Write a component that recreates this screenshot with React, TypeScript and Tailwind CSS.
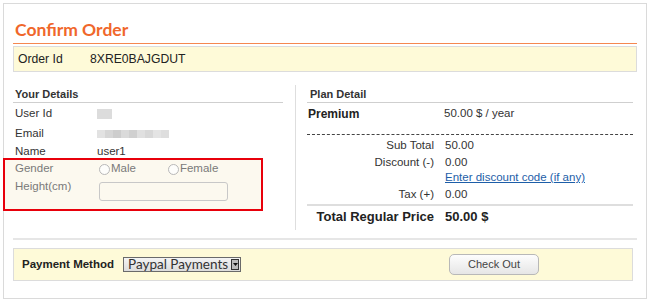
import React from 'react';

const sans = "font-['Liberation_Sans',Arial,sans-serif]";

const DetailRow: React.FC<{ label: string; h: string; children?: React.ReactNode }> = ({ label, h, children }) => (
  <div className={`flex items-center ${h} pl-[2px] text-[11.5px] text-[#333]`}>
    <div className="w-[82px]">{label}</div>
    <div>{children}</div>
  </div>
);

const PriceRow: React.FC<{ label: string; h: string; value: React.ReactNode; bold?: boolean }> = ({ label, h, value, bold }) => (
  <div className={`flex items-center ${h} ${bold ? 'font-bold text-[13px] text-[#222]' : 'text-[11.5px] text-[#333]'}`}>
    <div className="w-[127px] text-right">{label}</div>
    <div className="pl-[11px]">{value}</div>
  </div>
);

const Blur: React.FC<{ shades: string[] }> = ({ shades }) => (
  <div className="flex h-[8px] blur-[0.6px]">
    {shades.map((c, i) => (
      <div key={i} className="w-[8px] h-full" style={{ background: c }} />
    ))}
  </div>
);

const Radio: React.FC<{ label: string }> = ({ label }) => (
  <span className="flex items-center">
    <span className="w-[11px] h-[11px] rounded-full border border-[#b8b8b8] bg-[#fdfdfb]" />
    <span className="ml-[1px]">{label}</span>
  </span>
);

export default function App() {
  return (
    <div className={`w-[650px] h-[302px] bg-white pt-[3px] pl-[3px] ${sans}`}>
      <div className="w-[644px] h-[296px] border border-[#dadada] px-[9px]">
        {/* title */}
        <div className="pt-[14px] pb-[1px] border-b border-[#f5874f]">
          <div className="pl-[2px] leading-[24px] text-[17.5px] font-bold text-[#f0672b] font-['Lato',sans-serif]">Confirm Order</div>
        </div>

        {/* order id */}
        <div className="mt-[2px] h-[26px] flex items-center border border-[#dcdcdc] bg-[#fefad8] pl-[4px] text-[12.2px] text-[#222]">
          <div className="w-[72px]">Order Id</div>
          <div>8XRE0BAJGDUT</div>
        </div>

        {/* details + plan */}
        <div className="mt-[13px] h-[145px] flex">
          <div className="w-[270px]">
            <div className="mt-[2px] pb-[1px] border-b border-[#cfcfcf] pl-[2px] leading-[14px] text-[11px] font-bold text-[#333]">Your Details</div>
            <DetailRow label="User Id" h="h-[22px]">
              <div className="w-[15px] h-[10px] bg-[#dcdcdc] blur-[0.5px]" />
            </DetailRow>
            <DetailRow label="Email" h="h-[18px]">
              <Blur shades={['#e2e2e2', '#d6d6d6', '#cdcdcd', '#dadada', '#d0d0d0', '#e0e0e0', '#d8d8d8', '#e4e4e4', '#dedede']} />
            </DetailRow>
            <DetailRow label="Name" h="h-[18px]">user1</DetailRow>

            <div className="-mt-[3px] -ml-[10px] w-[260px] h-[53px] border-2 border-[#e8000b] bg-[#fcf9ef] pl-[10px] text-[11.5px] text-[#7a7a7a]">
              <div className="h-[18px] flex items-center">
                <div className="w-[84px]">Gender</div>
                <Radio label="Male" />
                <span className="ml-[32px]"><Radio label="Female" /></span>
              </div>
              <div className="flex">
                <div className="w-[84px] h-[16px] leading-[16px]">Height(cm)</div>
                <div className="mt-[4px] w-[129px] h-[19px] rounded-[3px] border border-[#c8c8c8] bg-[#fcf9ef]" />
              </div>
            </div>
          </div>

          <div className="ml-[12px] w-px h-full bg-[#dedede]" />

          <div className="ml-[11px] w-[326px]">
            <div className="mt-[2px] pb-[1px] border-b border-[#cfcfcf] pl-[3px] leading-[14px] text-[11px] font-bold text-[#333]">Plan Detail</div>
            <div className="flex items-center h-[22px] text-[11.5px] text-[#333]">
              <div className="w-[137px] pl-[1px] text-[12px] font-bold text-[#222]">Premium</div>
              <div>50.00 $ / year</div>
            </div>
            <div className="mt-[9px] border-t border-dashed border-[#444]" />
            <PriceRow label="Sub Total" h="mt-[2px] h-[18px]" value="50.00" />
            <PriceRow label="Discount (-)" h="h-[16px]" value="0.00" />
            <div className="h-[14px] flex items-center pl-[138px] text-[11.5px]">
              <a href="#" className="text-[#1d5ea8] underline">Enter discount code (if any)</a>
            </div>
            <PriceRow label="Tax (+)" h="h-[19px]" value="0.00" />
            <div className="h-[2px] bg-[#dedede]" />
            <PriceRow label="Total Regular Price" h="h-[22px]" value="50.00 $" bold />
          </div>
        </div>

        <div className="mt-[8px] h-[2px] bg-[#e6e6e6]" />

        {/* payment */}
        <div className="mt-[8px] w-[620px] h-[33px] flex items-center border border-[#dcdcdc] bg-[#fefad8] pl-[8px]">
          <div className="text-[11.5px] font-bold text-[#222]">Payment Method</div>
          <div className="ml-[9px] w-[118px] h-[15px] flex items-center border border-[#6a6a6a] bg-gradient-to-b from-[#f4f4f4] to-[#dcdcdc] overflow-hidden">
            <span className="flex-1 pl-[4px] leading-[13px] text-[13.5px] text-[#333] whitespace-nowrap font-['Lato',sans-serif]">Paypal Payments</span>
            <span className="mr-[1px] w-[8px] h-[11px] flex items-center justify-center bg-[#bdbdbd] border border-[#333]">
              <svg width="5" height="3" viewBox="0 0 5 3"><path d="M0 0h5L2.5 3z" fill="#111" /></svg>
            </span>
          </div>
          <button className="ml-[208px] w-[90px] h-[21px] rounded-[5px] border border-[#b8b8b8] bg-gradient-to-b from-[#fdfdfd] to-[#e6e6e6] text-[11px] text-[#444]">Check Out</button>
        </div>
      </div>
    </div>
  );
}
